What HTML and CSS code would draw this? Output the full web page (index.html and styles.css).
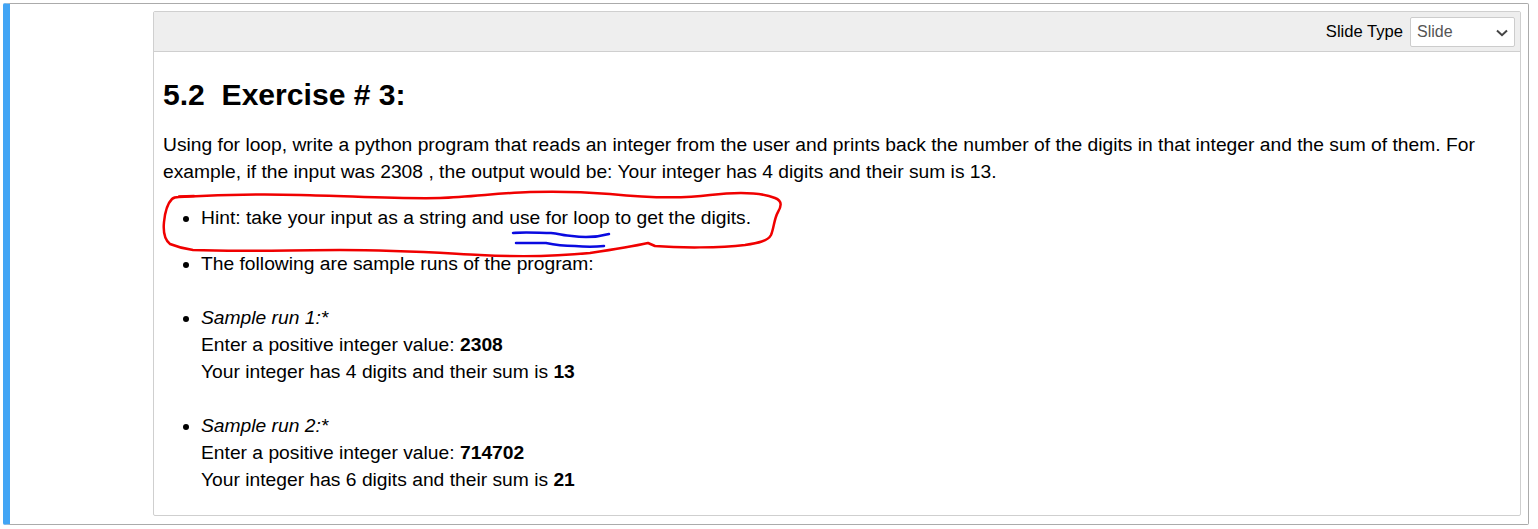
FILE: index.html
```html
<!DOCTYPE html>
<html lang="en">
  <head>
    <meta charset="UTF-8" />
    <title>Exercise 3</title>
    <link rel="stylesheet" href="styles.css">
  </head>

  <body>
    <div class="cell">
      <div class="card">
        <div class="toolbar">
          <label class="toolbar-label" for="slideType">Slide Type</label>
          <div class="select-wrap">
            <select class="slide-select" id="slideType">
              <option>Slide</option>
            </select>
            <svg class="select-arrow" width="12" height="8" viewBox="0 0 12 8">
              <path d="M1 1.5 L6 6.2 L11 1.5" />
            </svg>
          </div>
        </div>

        <div class="rendered">
          <h2>5.2&nbsp;&nbsp;Exercise # 3:</h2>
          <p>
            Using for loop, write a python program that reads an integer from the user and prints back the number of the digits in that integer and the sum of them. For example, if the input was 2308 , the output would be: Your integer has 4 digits and their sum is 13.
          </p>
          <ul>
            <li>Hint: take your input as a string and use for loop to get the digits.</li>
            <li>The following are sample runs of the program:<br />&nbsp;</li>
            <li>
              <em>Sample run 1:*</em><br />
              Enter a positive integer value: <strong>2308</strong><br />
              Your integer has 4 digits and their sum is <strong>13</strong><br />&nbsp;
            </li>
            <li>
              <em>Sample run 2:*</em><br />
              Enter a positive integer value: <strong>714702</strong><br />
              Your integer has 6 digits and their sum is <strong>21</strong>
            </li>
          </ul>
        </div>
      </div>
    </div>

    <!-- pen marks on top of the page -->
    <svg class="ink" width="1538" height="529" viewBox="0 0 1538 529">
      <path class="ink-red" d="M179 197 C215 195 260 194 300 195 C350 196 400 199 440 198 C470 197 500 193 530 192 C560 191 585 192 610 194 C640 197 680 199 710 195 C735 192 760 192 775 198 C783 201 781 207 778 212 C774 219 774 228 771 235 C768 241 758 243 745 245 C720 248 680 248 655 246 L648 243 C630 247 610 250 590 253 C560 256 520 257 480 255 C440 253 400 250 340 250 C290 250 240 252 193 250 C185 249 175 246 170 244 C165 240 163 232 164 222 C165 212 168 203 172 199 C174 197 176 197 179 197 Z" />
      <path class="ink-red" d="M179 196.5 L194 196" />
      <path class="ink-blue" d="M513 233 C525 232 540 233 551 233 C560 234 565 236 572 236 C585 238 598 237 609 234" />
      <path class="ink-blue" d="M516 243 C528 243 538 243 546 243 C555 245 565 246 575 246 C585 247 595 247 604 246" />
    </svg>
  </body>
</html>
```

FILE: styles.css
```css
* {
  box-sizing: border-box;
}

html,
body {
  margin: 0;
  padding: 0;
  height: 529px;
  overflow: hidden;
  background-color: #fff;
}

body {
  padding: 3px 9px 4px 3px;
  font-family: "Liberation Sans", Arial, sans-serif;
  color: #000;
}

.cell {
  height: 522px;
  padding: 7px 7px 7px 143px;
  border: 1px solid #ababab;
  border-left: 7px solid #42a5f5;
  border-radius: 2px;
}

.card {
  height: 505px;
  border: 1px solid #cfcfcf;
  border-radius: 2px;
}

.toolbar {
  height: 40px;
  display: flex;
  justify-content: flex-end;
  align-items: center;
  gap: 7px;
  padding-right: 5px;
  background-color: #eee;
  border-bottom: 1px solid #cfcfcf;
}

.toolbar-label {
  font-size: 16.6px;
}

.select-wrap {
  position: relative;
  height: 30px;
}

.slide-select {
  appearance: none;
  display: block;
  width: 105px;
  height: 30px;
  padding: 0 6px;
  font-family: inherit;
  font-size: 16px;
  color: #555;
  background-color: #fff;
  border: 1px solid #ccc;
  border-radius: 2px;
}

.select-arrow {
  position: absolute;
  right: 7px;
  top: 12px;
}

.select-arrow path {
  fill: none;
  stroke: #444;
  stroke-width: 2;
}

.rendered {
  padding: 0 9px;
  font-size: 19.25px;
  line-height: 27px;
}

.rendered h2 {
  margin: 24px 0 0;
  font-size: 30.1px;
  line-height: 37px;
  font-weight: bold;
}

.rendered p {
  margin: 18px 0 19px;
}

.rendered ul {
  margin: 0;
  padding-left: 38px;
}

.rendered li {
  margin-bottom: 19px;
}

.rendered li:nth-child(2) {
  margin-bottom: 0;
}

.rendered li:nth-child(3) {
  margin-bottom: 0;
}

.ink {
  position: absolute;
  left: 0;
  top: 0;
  pointer-events: none;
}

.ink path {
  fill: none;
  stroke-width: 2.5;
  stroke-linecap: round;
  stroke-linejoin: round;
}

.ink-red {
  stroke: #f00000;
}

.ink-blue {
  stroke: #0a0ae0;
}
```
